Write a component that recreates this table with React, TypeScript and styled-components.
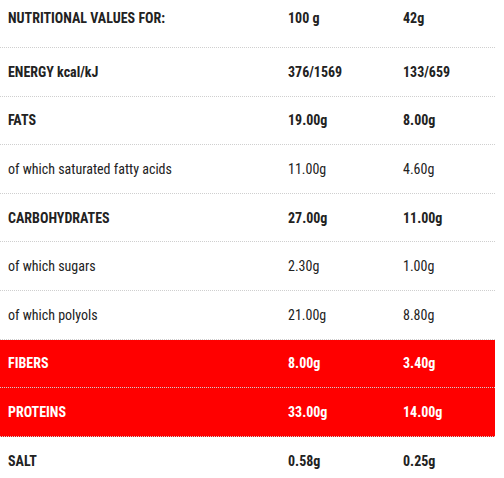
import React from 'react';
import styled, { createGlobalStyle } from 'styled-components';

const GlobalStyle = createGlobalStyle`
  body {
    margin: 0;
    background: #fff;
    overflow: hidden;
  }
`;

const Table = styled.div`
  width: 495px;
  font-family: 'Roboto Condensed', 'Roboto', 'Liberation Sans Narrow', sans-serif;
  font-stretch: condensed;
  font-size: 14px;
  color: #222;
`;

const Row = styled.div<{ $hl?: boolean; $last?: boolean; $head?: boolean }>`
  display: grid;
  grid-template-columns: 280px 115px 1fr;
  align-items: center;
  height: ${(p) => (p.$head ? '48px' : '48.6px')};
  padding-bottom: ${(p) => (p.$head ? '12px' : '0')};
  box-sizing: border-box;
  border-bottom: ${(p) => (p.$last ? 'none' : '1px dotted #cfcfcf')};
  background: ${(p) => (p.$hl ? '#ff0000' : 'transparent')};
  color: ${(p) => (p.$hl ? '#fff' : '#222')};
`;

const Cell = styled.div<{ $bold?: boolean }>`
  padding-left: 8px;
  font-weight: ${(p) => (p.$bold ? 700 : 400)};
  white-space: nowrap;
`;

type Item = { label: string; a: string; b: string; bold?: boolean; hl?: boolean };

const rows: Item[] = [
  { label: 'NUTRITIONAL VALUES FOR:', a: '100 g', b: '42g', bold: true },
  { label: 'ENERGY kcal/kJ', a: '376/1569', b: '133/659', bold: true },
  { label: 'FATS', a: '19.00g', b: '8.00g', bold: true },
  { label: 'of which saturated fatty acids', a: '11.00g', b: '4.60g' },
  { label: 'CARBOHYDRATES', a: '27.00g', b: '11.00g', bold: true },
  { label: 'of which sugars', a: '2.30g', b: '1.00g' },
  { label: 'of which polyols', a: '21.00g', b: '8.80g' },
  { label: 'FIBERS', a: '8.00g', b: '3.40g', bold: true, hl: true },
  { label: 'PROTEINS', a: '33.00g', b: '14.00g', bold: true, hl: true },
  { label: 'SALT', a: '0.58g', b: '0.25g', bold: true },
];

const App: React.FC = () => (
  <>
    <GlobalStyle />
    <Table>
      {rows.map((r, i) => (
        <Row key={r.label} $hl={r.hl} $head={i === 0} $last={i === rows.length - 1}>
          <Cell $bold={r.bold}>{r.label}</Cell>
          <Cell $bold={r.bold}>{r.a}</Cell>
          <Cell $bold={r.bold}>{r.b}</Cell>
        </Row>
      ))}
    </Table>
  </>
);

export default App;
